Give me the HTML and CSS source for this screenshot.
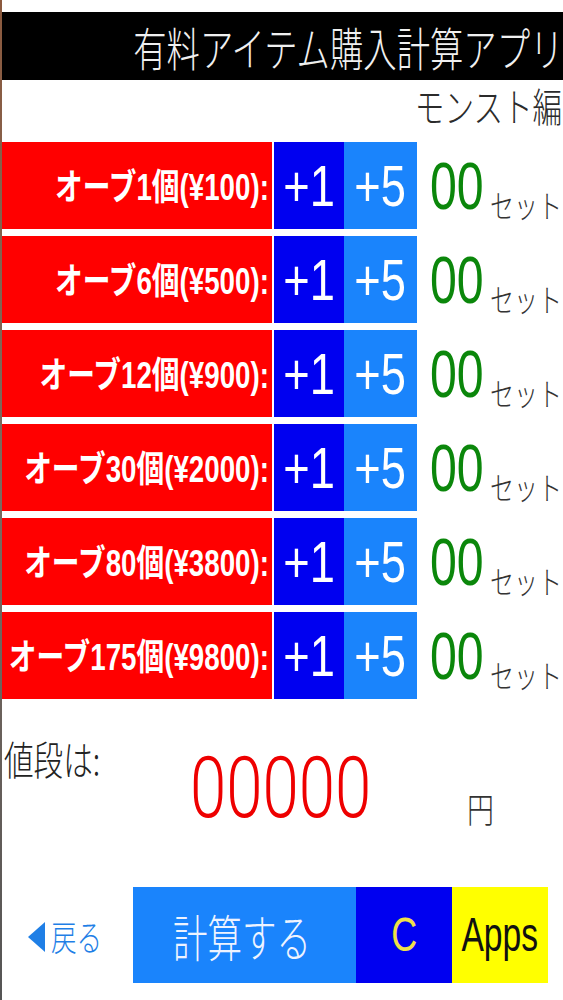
FILE: index.html
```html
<!DOCTYPE html>
<html lang="ja">
<head>
<meta charset="utf-8">
<title>有料アイテム購入計算アプリ</title>
<link rel="stylesheet" href="styles.css">
</head>
<body>
<div class="app">
  <header class="titlebar"><span class="title">有料アイテム購入計算アプリ</span></header>
  <div class="subtitle"><span class="subtitle-text">モンスト編</span></div>

  <main class="rows">
    <div class="row">
      <div class="label"><span class="label-text">オーブ1個(¥100):</span></div>
      <div class="btn plus1"><span class="plus-text">+1</span></div>
      <div class="btn plus5"><span class="plus-text">+5</span></div>
      <div class="count"><span class="count-num">00</span><span class="count-unit">セット</span></div>
    </div>
    <div class="row">
      <div class="label"><span class="label-text">オーブ6個(¥500):</span></div>
      <div class="btn plus1"><span class="plus-text">+1</span></div>
      <div class="btn plus5"><span class="plus-text">+5</span></div>
      <div class="count"><span class="count-num">00</span><span class="count-unit">セット</span></div>
    </div>
    <div class="row">
      <div class="label"><span class="label-text">オーブ12個(¥900):</span></div>
      <div class="btn plus1"><span class="plus-text">+1</span></div>
      <div class="btn plus5"><span class="plus-text">+5</span></div>
      <div class="count"><span class="count-num">00</span><span class="count-unit">セット</span></div>
    </div>
    <div class="row">
      <div class="label"><span class="label-text">オーブ30個(¥2000):</span></div>
      <div class="btn plus1"><span class="plus-text">+1</span></div>
      <div class="btn plus5"><span class="plus-text">+5</span></div>
      <div class="count"><span class="count-num">00</span><span class="count-unit">セット</span></div>
    </div>
    <div class="row">
      <div class="label"><span class="label-text">オーブ80個(¥3800):</span></div>
      <div class="btn plus1"><span class="plus-text">+1</span></div>
      <div class="btn plus5"><span class="plus-text">+5</span></div>
      <div class="count"><span class="count-num">00</span><span class="count-unit">セット</span></div>
    </div>
    <div class="row">
      <div class="label"><span class="label-text">オーブ175個(¥9800):</span></div>
      <div class="btn plus1"><span class="plus-text">+1</span></div>
      <div class="btn plus5"><span class="plus-text">+5</span></div>
      <div class="count"><span class="count-num">00</span><span class="count-unit">セット</span></div>
    </div>
  </main>

  <section class="price">
    <div class="price-label"><span class="price-label-text">値段は:</span></div>
    <div class="price-value"><span class="price-value-text">00000</span></div>
    <div class="price-unit"><span class="price-unit-text">円</span></div>
  </section>

  <footer class="actions">
    <div class="back">
      <svg class="back-icon" width="17" height="30" viewBox="0 0 17 30"><polygon points="17,0 17,30 0,15" fill="#1f7fe6"/></svg>
      <span class="back-text">戻る</span>
    </div>
    <div class="action calc"><span class="calc-text">計算する</span></div>
    <div class="action clear"><span class="clear-text">C</span></div>
    <div class="action apps"><span class="apps-text">Apps</span></div>
  </footer>
</div>
</body>
</html>
```
FILE: styles.css
```css
html, body {
  margin: 0;
  padding: 0;
  background: #fff;
}

body {
  width: 563px;
  height: 1000px;
  overflow: hidden;
  font-family: "Noto Sans CJK JP", sans-serif;
}

.app {
  height: 1000px;
  padding-top: 12px;
  box-sizing: border-box;
  border-left: 2px solid #7a5a48;
  border-image: linear-gradient(to bottom, #8c5a3e, #7a6a60 50%, #555 100%) 1;
  overflow: hidden;
}

/* title bar */
.titlebar {
  height: 68px;
  background: #000;
  display: flex;
  justify-content: flex-end;
  align-items: center;
}

.title {
  display: inline-block;
  white-space: nowrap;
  font-size: 46px;
  line-height: 1;
  font-weight: 300;
  color: #f0f0f0;
  transform: scaleX(0.725);
  transform-origin: right center;
}

.subtitle {
  height: 62px;
  display: flex;
  justify-content: flex-end;
  align-items: flex-start;
}

.subtitle-text {
  display: inline-block;
  white-space: nowrap;
  font-size: 40px;
  line-height: 50px;
  font-weight: 300;
  color: #2b2b2b;
  margin-right: 1px;
  transform: scaleX(0.74);
  transform-origin: right center;
}

/* item rows */
.rows {
  display: flex;
  flex-direction: column;
  gap: 7px;
}

.row {
  display: flex;
  height: 87px;
}

.label {
  flex: none;
  width: 270px;
  margin-right: 2px;
  background: #ff0000;
  display: flex;
  justify-content: flex-end;
  align-items: center;
  padding-right: 3px;
  box-sizing: border-box;
}

.label-text {
  display: inline-block;
  white-space: nowrap;
  font-family: "Liberation Sans", "Noto Sans CJK JP", sans-serif;
  font-weight: 700;
  font-size: 36px;
  line-height: 1;
  color: #fff;
  padding-top: 4px;
  transform: scaleX(0.77);
  transform-origin: right center;
}

.btn {
  flex: none;
  display: flex;
  justify-content: center;
  align-items: center;
}

.plus1 {
  width: 70px;
  background: #0000f0;
}

.plus5 {
  width: 73px;
  background: #1a84fc;
}

.plus-text {
  display: inline-block;
  white-space: nowrap;
  font-family: "Liberation Sans", sans-serif;
  font-size: 58px;
  line-height: 1;
  color: #fff;
  transform: scaleX(0.78);
  transform-origin: center center;
}

.count {
  flex: 1 1 auto;
  min-width: 0;
  display: flex;
  align-items: flex-start;
  padding-left: 13px;
}

.count-num {
  flex: none;
  display: inline-block;
  width: 60px;
  white-space: nowrap;
  font-family: "Liberation Sans", sans-serif;
  font-size: 67px;
  line-height: 1;
  color: #0b870b;
  margin-top: 10px;
  transform: scaleX(0.72);
  transform-origin: left center;
}

.count-unit {
  flex: none;
  display: inline-block;
  white-space: nowrap;
  font-size: 32px;
  line-height: 1;
  font-weight: 300;
  color: #333;
  margin-top: 46px;
  transform: scaleX(0.75);
  transform-origin: left center;
}

/* price */
.price {
  height: 188px;
  display: grid;
  grid-template-columns: 188px 277px 1fr;
  align-items: start;
}

.price-label {
  padding-left: 2px;
  margin-top: 39px;
}

.price-label-text {
  display: inline-block;
  white-space: nowrap;
  font-size: 40px;
  line-height: 1;
  font-weight: 300;
  color: #222;
  transform: scaleX(0.74);
  transform-origin: left center;
}

.price-value {
  margin-top: 46px;
}

.price-value-text {
  display: inline-block;
  white-space: nowrap;
  font-family: Roboto, "Liberation Sans", sans-serif;
  font-weight: 300;
  font-size: 86px;
  line-height: 1;
  color: #ee0000;
  transform: scaleX(0.76);
  transform-origin: left center;
}

.price-unit {
  margin-top: 91px;
}

.price-unit-text {
  display: inline-block;
  white-space: nowrap;
  font-size: 35px;
  line-height: 1;
  font-weight: 300;
  color: #333;
  transform: scaleX(0.77);
  transform-origin: left center;
}

/* bottom actions */
.actions {
  display: flex;
  height: 96px;
}

.back {
  flex: none;
  width: 131px;
  display: flex;
  align-items: center;
  padding-left: 26px;
  box-sizing: border-box;
  gap: 6px;
}

.back-icon {
  flex: none;
  margin-top: 3px;
}

.back-text {
  display: inline-block;
  white-space: nowrap;
  font-size: 35px;
  line-height: 1;
  font-weight: 300;
  color: #1f7fe6;
  transform: scaleX(0.73);
  transform-origin: left center;
}

.action {
  flex: none;
  display: flex;
  justify-content: center;
  align-items: center;
}

.calc {
  width: 223px;
  background: #1a84fc;
}

.calc-text {
  display: inline-block;
  white-space: nowrap;
  font-size: 50px;
  line-height: 1;
  font-weight: 300;
  color: #eef3ff;
  margin-right: 6px;
  transform: scaleX(0.69);
  transform-origin: center center;
}

.clear {
  width: 96px;
  background: #0000f0;
}

.clear-text {
  display: inline-block;
  font-family: "Liberation Sans", sans-serif;
  font-size: 48px;
  line-height: 1;
  color: #f0e048;
  transform: scaleX(0.75);
  transform-origin: center center;
}

.apps {
  width: 96px;
  background: #ffff00;
}

.apps-text {
  display: inline-block;
  white-space: nowrap;
  font-family: "Liberation Sans", sans-serif;
  font-size: 48px;
  line-height: 1;
  color: #111;
  transform: scaleX(0.7);
  transform-origin: center center;
}
```
